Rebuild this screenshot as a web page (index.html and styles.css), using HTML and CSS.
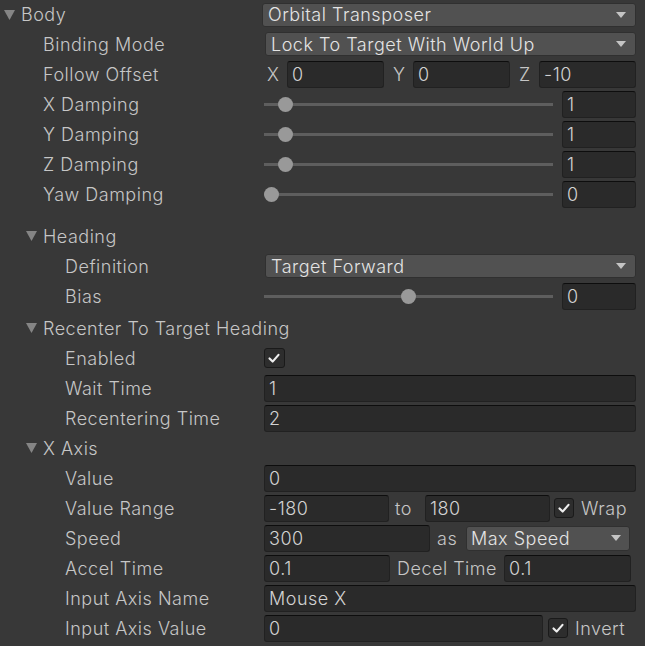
FILE: index.html
```html
<!DOCTYPE html>
<html>
<head>
<meta charset="utf-8">
<link rel="stylesheet" href="styles.css">
</head>
<body>
<div class="panel">
  <div class="row first">
    <div class="label l0 fold"><svg class="tri" viewBox="0 0 11 10"><polygon points="0,0 11,0 5.5,10"/></svg>Body</div>
    <div class="ctrl"><div class="popup wide head"><span>Orbital Transposer</span><svg class="arrow" viewBox="0 0 10 6"><polygon points="0,0 10,0 5,6"/></svg></div></div>
  </div>
  <div class="row">
    <div class="label l1">Binding Mode</div>
    <div class="ctrl"><div class="popup wide"><span>Lock To Target With World Up</span><svg class="arrow" viewBox="0 0 10 6"><polygon points="0,0 10,0 5,6"/></svg></div></div>
  </div>
  <div class="row">
    <div class="label l1">Follow Offset</div>
    <div class="ctrl vec">
      <div class="comp"><span class="clabel">X</span><div class="field">0</div></div>
      <div class="comp"><span class="clabel">Y</span><div class="field">0</div></div>
      <div class="comp"><span class="clabel">Z</span><div class="field">-10</div></div>
    </div>
  </div>
  <div class="row">
    <div class="label l1">X Damping</div>
    <div class="ctrl"><div class="slider"><div class="thumb" style="--f:0.05"></div></div><div class="field num">1</div></div>
  </div>
  <div class="row">
    <div class="label l1">Y Damping</div>
    <div class="ctrl"><div class="slider"><div class="thumb" style="--f:0.05"></div></div><div class="field num">1</div></div>
  </div>
  <div class="row">
    <div class="label l1">Z Damping</div>
    <div class="ctrl"><div class="slider"><div class="thumb" style="--f:0.05"></div></div><div class="field num">1</div></div>
  </div>
  <div class="row">
    <div class="label l1">Yaw Damping</div>
    <div class="ctrl"><div class="slider"><div class="thumb" style="--f:0"></div></div><div class="field num">0</div></div>
  </div>
  <div class="spacer12"></div>
  <div class="row">
    <div class="label l1 fold"><svg class="tri" viewBox="0 0 11 10"><polygon points="0,0 11,0 5.5,10"/></svg>Heading</div>
  </div>
  <div class="row">
    <div class="label l2">Definition</div>
    <div class="ctrl"><div class="popup wide"><span>Target Forward</span><svg class="arrow" viewBox="0 0 10 6"><polygon points="0,0 10,0 5,6"/></svg></div></div>
  </div>
  <div class="row">
    <div class="label l2">Bias</div>
    <div class="ctrl"><div class="slider"><div class="thumb" style="--f:0.5"></div></div><div class="field num">0</div></div>
  </div>
  <div class="spacer2"></div>
  <div class="row">
    <div class="label l1 fold"><svg class="tri" viewBox="0 0 11 10"><polygon points="0,0 11,0 5.5,10"/></svg>Recenter To Target Heading</div>
  </div>
  <div class="row">
    <div class="label l2">Enabled</div>
    <div class="ctrl"><div class="check first-check"><svg viewBox="0 0 20 20"><polyline points="5,10.5 8.5,14 15,6.5"/></svg></div></div>
  </div>
  <div class="row">
    <div class="label l2">Wait Time</div>
    <div class="ctrl"><div class="field grow">1</div></div>
  </div>
  <div class="row">
    <div class="label l2">Recentering Time</div>
    <div class="ctrl"><div class="field grow">2</div></div>
  </div>
  <div class="row">
    <div class="label l1 fold"><svg class="tri" viewBox="0 0 11 10"><polygon points="0,0 11,0 5.5,10"/></svg>X Axis</div>
  </div>
  <div class="row">
    <div class="label l2">Value</div>
    <div class="ctrl"><div class="field grow">0</div></div>
  </div>
  <div class="row">
    <div class="label l2">Value Range</div>
    <div class="ctrl">
      <div class="field w125">-180</div>
      <span class="mid to">to</span>
      <div class="field w125">180</div>
      <div class="check wrapcheck"><svg viewBox="0 0 20 20"><polyline points="5,10.5 8.5,14 15,6.5"/></svg></div>
      <span class="cklabel">Wrap</span>
    </div>
  </div>
  <div class="row">
    <div class="label l2">Speed</div>
    <div class="ctrl">
      <div class="field w166">300</div>
      <span class="mid as">as</span>
      <div class="popup small"><span>Max Speed</span><svg class="arrow" viewBox="0 0 10 6"><polygon points="0,0 10,0 5,6"/></svg></div>
    </div>
  </div>
  <div class="row">
    <div class="label l2">Accel Time</div>
    <div class="ctrl">
      <div class="field w126">0.1</div>
      <span class="mid decel">Decel Time</span>
      <div class="field w127">0.1</div>
    </div>
  </div>
  <div class="row">
    <div class="label l2">Input Axis Name</div>
    <div class="ctrl"><div class="field grow">Mouse X</div></div>
  </div>
  <div class="row">
    <div class="label l2">Input Axis Value</div>
    <div class="ctrl">
      <div class="field w279">0</div>
      <div class="check invcheck"><svg viewBox="0 0 20 20"><polyline points="5,10.5 8.5,14 15,6.5"/></svg></div>
      <span class="cklabel">Invert</span>
    </div>
  </div>
</div>
</body>
</html>
```
FILE: styles.css
```css
html, body {
  margin: 0;
  background: #383838;
}
body {
  font-family: Inter, "Noto Sans", sans-serif;
  font-size: 18px;
  font-weight: 350;
  color: #c6c6c6;
  letter-spacing: 0.5px;
}
.panel {
  padding-right: 9px;
  width: 645px;
  box-sizing: border-box;
}
.row {
  display: flex;
  align-items: center;
  height: 30px;
}
.row.first {
  height: 29px;
}
.spacer12 { height: 12px; }
.spacer2 { height: 2px; }
.label {
  width: 263px;
  flex-shrink: 0;
  box-sizing: border-box;
  display: flex;
  align-items: center;
  white-space: nowrap;
}
.l0 { padding-left: 21px; }
.l1 { padding-left: 43px; }
.l2 { padding-left: 65px; }
.tri {
  width: 11px;
  height: 10px;
  margin-left: -17px;
  margin-right: 6px;
  fill: #858585;
  flex-shrink: 0;
}
.ctrl {
  flex: 1;
  min-width: 0;
  display: flex;
  align-items: center;
}
.field {
  height: 27px;
  box-sizing: border-box;
  background: #2a2a2a;
  border: 1px solid #212121;
  border-top-color: #0d0d0d;
  border-radius: 3px;
  padding: 0 4px;
  display: flex;
  align-items: center;
  color: #d2d2d2;
  white-space: nowrap;
  overflow: hidden;
}
.grow { flex: 1; margin-left: 1px; }
.popup {
  height: 24px;
  box-sizing: border-box;
  background: #515151;
  border: 1px solid #303030;
  border-radius: 3px;
  padding: 0 9px 0 5px;
  display: flex;
  align-items: center;
  justify-content: space-between;
  color: #e4e4e4;
  white-space: nowrap;
}
.popup.wide { flex: 1; margin-left: 2px; }
.popup.wide.head { margin-left: -1px; }
.arrow {
  width: 10px;
  height: 6px;
  fill: #c4c4c4;
}
.vec {
  gap: 5px;
}
.comp {
  flex: 1;
  display: flex;
  align-items: center;
  min-width: 0;
}
.clabel {
  width: 24px;
  flex-shrink: 0;
  box-sizing: border-box;
  padding-left: 4px;
}
.comp .field { flex: 1; min-width: 0; }
.slider {
  flex: 1;
  height: 3px;
  margin: 0 9px 0 1px;
  background: #5e5e5e;
  position: relative;
}
.thumb {
  position: absolute;
  top: -6px;
  left: calc((100% - 15px) * var(--f));
  width: 15px;
  height: 15px;
  border-radius: 50%;
  background: #999999;
}
.num { width: 74px; flex-shrink: 0; }
.check {
  width: 20px;
  height: 20px;
  box-sizing: border-box;
  background: #2d2d2d;
  border: 1px solid #1a1a1a;
  border-radius: 3px;
  flex-shrink: 0;
}
.check svg {
  width: 18px;
  height: 18px;
  display: block;
  fill: none;
  stroke: #eeeeee;
  stroke-width: 2.4;
  stroke-linecap: round;
  stroke-linejoin: round;
}
.first-check { margin-left: 1px; width: 21px; }
.w125 { width: 125px; flex-shrink: 0; margin-left: 1px; }
.w126 { width: 126px; flex-shrink: 0; margin-left: 1px; }
.w127 { width: 127px; flex-shrink: 0; }
.w166 { width: 166px; flex-shrink: 0; margin-left: 1px; }
.w279 { width: 279px; flex-shrink: 0; margin-left: 1px; }
.mid { white-space: nowrap; }
.to { width: 35px; box-sizing: border-box; padding-left: 6px; }
.as { width: 36px; box-sizing: border-box; padding-left: 7px; }
.decel { width: 114px; box-sizing: border-box; padding-left: 7px; }
.wrapcheck { margin-left: 4px; }
.invcheck { margin-left: 5px; }
.cklabel { margin-left: 7px; white-space: nowrap; }
.popup.small { width: 164px; height: 25px; padding-left: 4px; padding-right: 8px; }
```
